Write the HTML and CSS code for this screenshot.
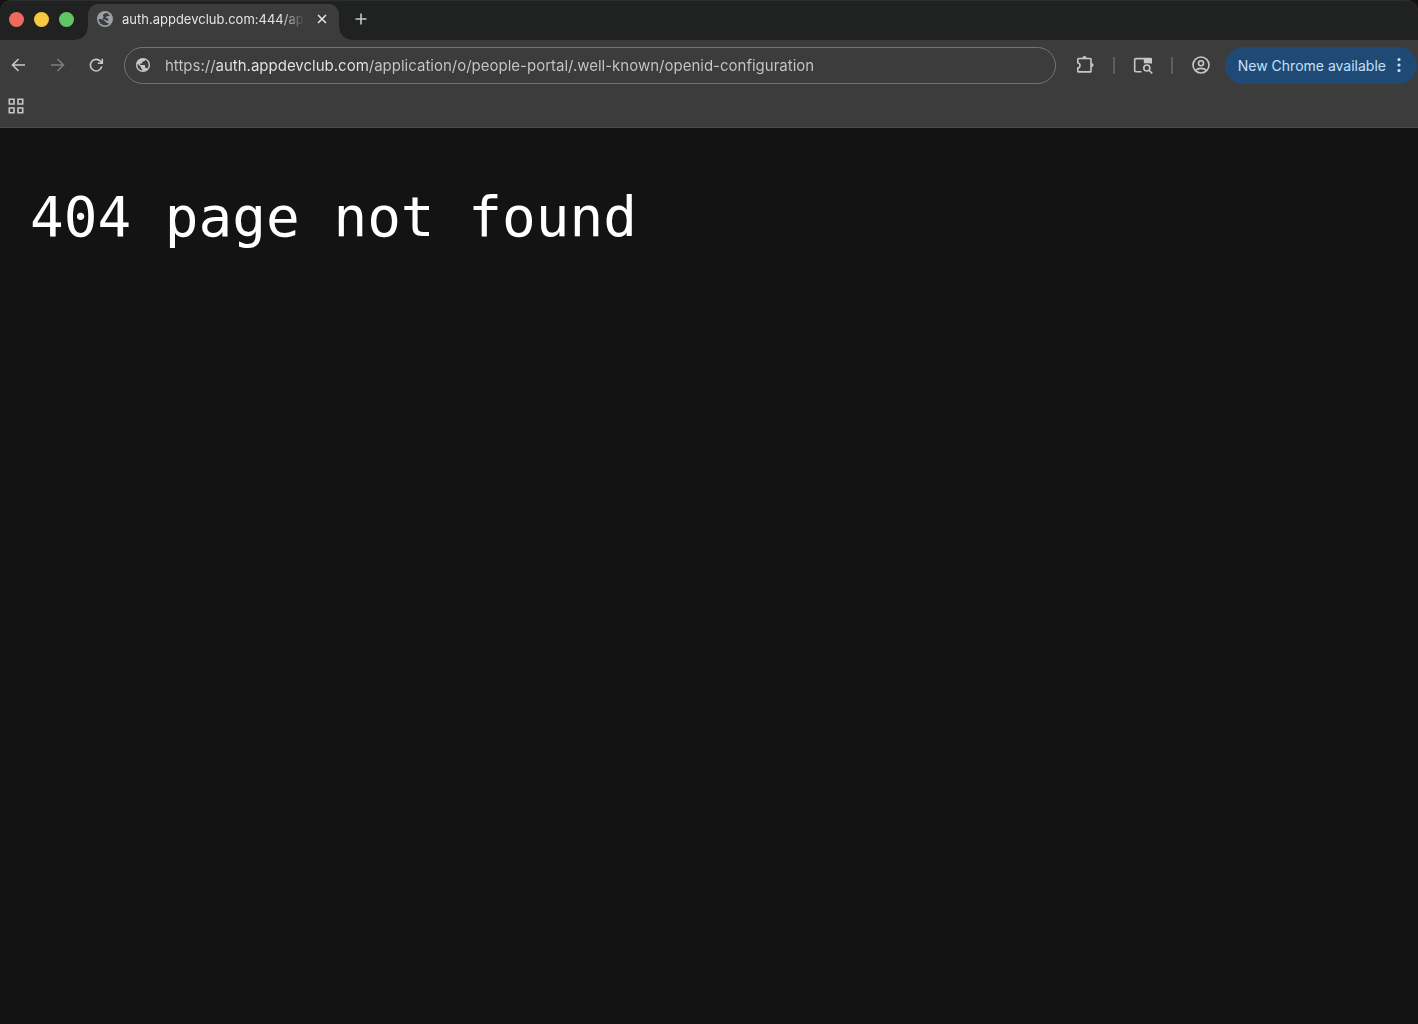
FILE: index.html
```
<!doctype html>
<html lang="en">
  <head>
    <meta charset="UTF-8" />
    <meta name="viewport" content="width=device-width, initial-scale=1.0" />
    <title>auth.appdevclub.com:444/application/o/people-portal</title>
    <link rel="stylesheet" href="styles.css">
  </head>
  <body>
    <header class="browser">
      <div class="tab-strip">
        <div class="lights">
          <button class="light red" aria-label="Close window"></button>
          <button class="light yellow" aria-label="Minimize window"></button>
          <button class="light green" aria-label="Zoom window"></button>
        </div>
        <div class="tab">
          <svg class="favicon" viewBox="0 0 16 16" aria-hidden="true">
            <circle cx="8" cy="8" r="8" fill="#9aa0a6" />
            <path fill="#3c3c3c" d="M9.500 1.900C8 2.300 6 3 6 4.200c0 .9.700 1 .6 1.700-.1.600-.9.800-.9 1.500 0 1 1 1.200 2 1.200 1.200 0 1.700 1.300 2.700 1.300.8 0 .9-.6.9-1.300 0-.8-.8-1.200-1.800-1.500-.9-.3-.9-1.200 0-1.500 1.200-.4 2.500-.3 3.200-1C11.800 3.200 10.700 2.200 9.500 1.900zM1.700 8c0 3.200 2.400 5.900 5.600 6.300 1.300.1 3.700-.2 4.700-1.300.5-.6-.6-.8-1.400-.8-1.200 0-1-.9-1.900-1.400-.8-.4-1.300-1.300-2.100-1.800C4.800 7.900 3.200 8 1.700 8z" />
          </svg>
          <span class="tab-title">auth.appdevclub.com:444/application</span>
          <button class="tab-close" aria-label="Close tab">
            <svg viewBox="0 0 10 10"><path d="M1 1l8 8M9 1l-8 8" /></svg>
          </button>
        </div>
        <button class="new-tab" aria-label="New tab">
          <svg viewBox="0 0 12 12"><path d="M6 .5v11M.5 6h11" /></svg>
        </button>
      </div>

      <div class="toolbar">
        <nav class="nav">
          <button class="icon-btn" aria-label="Back">
            <svg viewBox="0 0 20 20"><path d="M17 10H5M10.500 4l-6 6 6 6" /></svg>
          </button>
          <button class="icon-btn dim" aria-label="Forward" disabled>
            <svg viewBox="0 0 20 20"><path d="M4 10h12M10.500 4l6 6-6 6" /></svg>
          </button>
          <button class="icon-btn" aria-label="Reload">
            <svg viewBox="0 0 20 20"><path d="M15.800 11.500A5.800 5.800 0 1 1 14.500 6.300L16.300 8M16.300 3.800V8.300H11.800" /></svg>
          </button>
        </nav>

        <label class="omnibox">
          <svg class="globe" viewBox="2 2 20 20" aria-hidden="true">
            <path d="M12 2C6.480 2 2 6.480 2 12s4.480 10 10 10 10-4.480 10-10S17.520 2 12 2zm-1 17.930c-3.950-.49-7-3.850-7-7.930 0-.62.08-1.210.21-1.790L9 15v1c0 1.100.9 2 2 2v1.930zm6.900-2.540c-.26-.81-1-1.390-1.900-1.390h-1v-3c0-.55-.45-1-1-1H8v-2h2c.55 0 1-.45 1-1V7h2c1.100 0 2-.9 2-2v-.41c2.930 1.190 5 4.060 5 7.410 0 2.080-.8 3.970-2.100 5.390z" />
          </svg>
          <input class="url" type="text" aria-label="Address" spellcheck="false" value="https://auth.appdevclub.com/application/o/people-portal/.well-known/openid-configuration">
        </label>

        <div class="actions">
          <button class="icon-btn" aria-label="Extensions">
            <svg viewBox="0 0 20 20">
              <path d="M3.500 3.500h11.800q.7 0 .7.700v12q0 .7-.7.700H3.500q-.7 0-.7-.7V13c1.400-.3 2.200-1.300 2.200-2.600S4.200 8.100 2.800 7.800V4.200q0-.7.700-.7z" />
              <path class="solid" d="M7.400 3a2.100 2.100 0 0 1 4.200 0zM16.500 8a2.100 2.100 0 0 1 0 4.200z" />
            </svg>
          </button>
          <span class="divider"></span>
          <button class="icon-btn" aria-label="Search side panel">
            <svg viewBox="0 0 20 20">
              <path d="M8.500 16.800H2.700c-.7 0-1-.4-1-1V4.600c0-.7.400-1 1-1H17.400c.6 0 .8.300.8.800v4" />
              <path class="solid" d="M10.800 3.300h8.200v5h-8.200z" />
              <circle cx="13.800" cy="13" r="3" />
              <path d="M16 15.200l3.200 3.200" />
            </svg>
          </button>
          <span class="divider"></span>
          <button class="icon-btn" aria-label="Profile">
            <svg viewBox="0 0 20 20">
              <circle cx="10" cy="10" r="8" />
              <circle cx="10" cy="8.300" r="2.500" />
              <path d="M4.500 15.500c1.500-1.500 3.500-2.100 5.500-2.100s4 .6 5.500 2.100" />
            </svg>
          </button>
          <button class="update">
            New Chrome available
            <svg viewBox="0 0 4 16" aria-hidden="true">
              <circle cx="2" cy="2.500" r="1.600" /><circle cx="2" cy="8" r="1.600" /><circle cx="2" cy="13.500" r="1.600" />
            </svg>
          </button>
        </div>
      </div>

      <div class="bookmarks">
        <button class="apps" aria-label="Apps">
          <svg viewBox="0 0 16 16"><path d="M1.300 1.300h4.700v4.700H1.300zM10 1.300h4.700v4.700H10zM1.300 10h4.700v4.700H1.300zM10 10h4.700v4.700H10z" /></svg>
        </button>
      </div>
    </header>

    <main class="page">
      <pre class="message">404 page not found</pre>
    </main>
  </body>
</html>
```
FILE: styles.css
```
* {
  margin: 0;
  padding: 0;
  box-sizing: border-box;
}

body {
  min-height: 100vh;
  display: flex;
  flex-direction: column;
  background: #131313;
  font-family: Inter, Roboto, sans-serif;
}

button {
  display: flex;
  align-items: center;
  justify-content: center;
  border: none;
  background: none;
  font: inherit;
  cursor: pointer;
}

svg {
  display: block;
  flex-shrink: 0;
  fill: none;
  stroke: #c7c7c7;
  stroke-width: 1.6;
}

.browser {
  background: #3c3c3c;
  border-bottom: 1px solid #4a4a4a;
  border-radius: 12px 12px 0 0;
}

/* Tabs */
.tab-strip {
  height: 40px;
  display: flex;
  align-items: flex-end;
  background: #202221;
  border-radius: 12px 12px 0 0;
  box-shadow: inset 0 1px 0 #2c2e2d;
}

.lights {
  display: flex;
  align-items: center;
  gap: 10px;
  height: 40px;
  padding: 0 14px 2px 9px;
}

.light {
  width: 15px;
  height: 15px;
  border-radius: 50%;
}

.red {
  background: #ed6a5f;
}

.yellow {
  background: #f5c944;
}

.green {
  background: #62c665;
}

.tab {
  position: relative;
  display: flex;
  align-items: center;
  width: 251px;
  height: 36px;
  padding: 0 9px 7px 9px;
  background: #3c3c3c;
  border-radius: 10px 10px 0 0;
}

/* rounded feet on both sides of the tab */
.tab::before,
.tab::after {
  content: "";
  position: absolute;
  bottom: 0;
  width: 12px;
  height: 12px;
}

.tab::before {
  right: 100%;
  background: radial-gradient(circle at 0 0, transparent 11px, #3c3c3c 12px);
}

.tab::after {
  left: 100%;
  background: radial-gradient(circle at 100% 0, transparent 11px, #3c3c3c 12px);
}

.favicon {
  width: 16px;
  height: 16px;
  stroke: none;
}

.tab-title {
  flex: 1;
  min-width: 0;
  margin: 0 9px;
  overflow: hidden;
  white-space: nowrap;
  font-size: 13px;
  line-height: 18px;
  color: #e3e3e3;
  mask-image: linear-gradient(to left, transparent, #000 24px);
}

.tab-close {
  width: 16px;
  height: 16px;
}

.tab-close svg {
  width: 10px;
  height: 10px;
  stroke: #e3e3e3;
}

.new-tab {
  width: 36px;
  height: 36px;
  margin-left: 4px;
  padding-bottom: 6px;
}

.new-tab svg {
  width: 12px;
  height: 12px;
}

/* Toolbar */
.toolbar {
  display: flex;
  align-items: center;
  height: 50px;
  padding-right: 1px;
}

.nav {
  display: flex;
  gap: 3px;
}

.icon-btn {
  width: 36px;
  height: 36px;
}

.icon-btn svg {
  width: 20px;
  height: 20px;
}

.icon-btn .solid {
  fill: #c7c7c7;
  stroke: none;
}

.icon-btn.dim svg {
  stroke: #7c7c7c;
}

.omnibox {
  flex: 1;
  display: flex;
  align-items: center;
  gap: 15px;
  height: 37px;
  margin: 0 11px 0 10px;
  padding: 0 12px 0 11px;
  border: 1px solid #757575;
  border-radius: 19px;
}

.globe {
  width: 14px;
  height: 14px;
  fill: #c7c7c7;
  stroke: none;
}

/* host name is brighter than the rest of the address */
.url {
  flex: 1;
  min-width: 0;
  height: 24px;
  border: none;
  outline: none;
  font: 15px Inter, Roboto, sans-serif;
  color: transparent;
  background: linear-gradient(to right, #c7c7c7 50px, #e8e8e8 50px 204px, #c7c7c7 204px);
  -webkit-background-clip: text;
  background-clip: text;
}

.actions {
  display: flex;
  align-items: center;
}

.divider {
  width: 2px;
  height: 17px;
  margin: 0 10px;
  background: #5e5e5e;
}

.update {
  gap: 11px;
  height: 37px;
  margin-left: 6px;
  padding: 0 16px 0 13px;
  border-radius: 19px;
  background: #1f4a76;
  color: #c2e0fb;
  font-size: 14px;
  white-space: nowrap;
}

.update svg {
  width: 4px;
  height: 16px;
  fill: #c2e0fb;
  stroke: none;
}

/* Bookmarks bar */
.bookmarks {
  display: flex;
  align-items: center;
  height: 37px;
  padding: 0 8px 6px;
}

.apps svg {
  width: 16px;
  height: 16px;
}

/* Page */
.page {
  flex: 1;
  padding: 56px 30px;
  color: #fff;
}

.message {
  font-family: "DejaVu Sans Mono", monospace;
  font-size: 56px;
  line-height: 66px;
  white-space: pre-wrap;
}
```
